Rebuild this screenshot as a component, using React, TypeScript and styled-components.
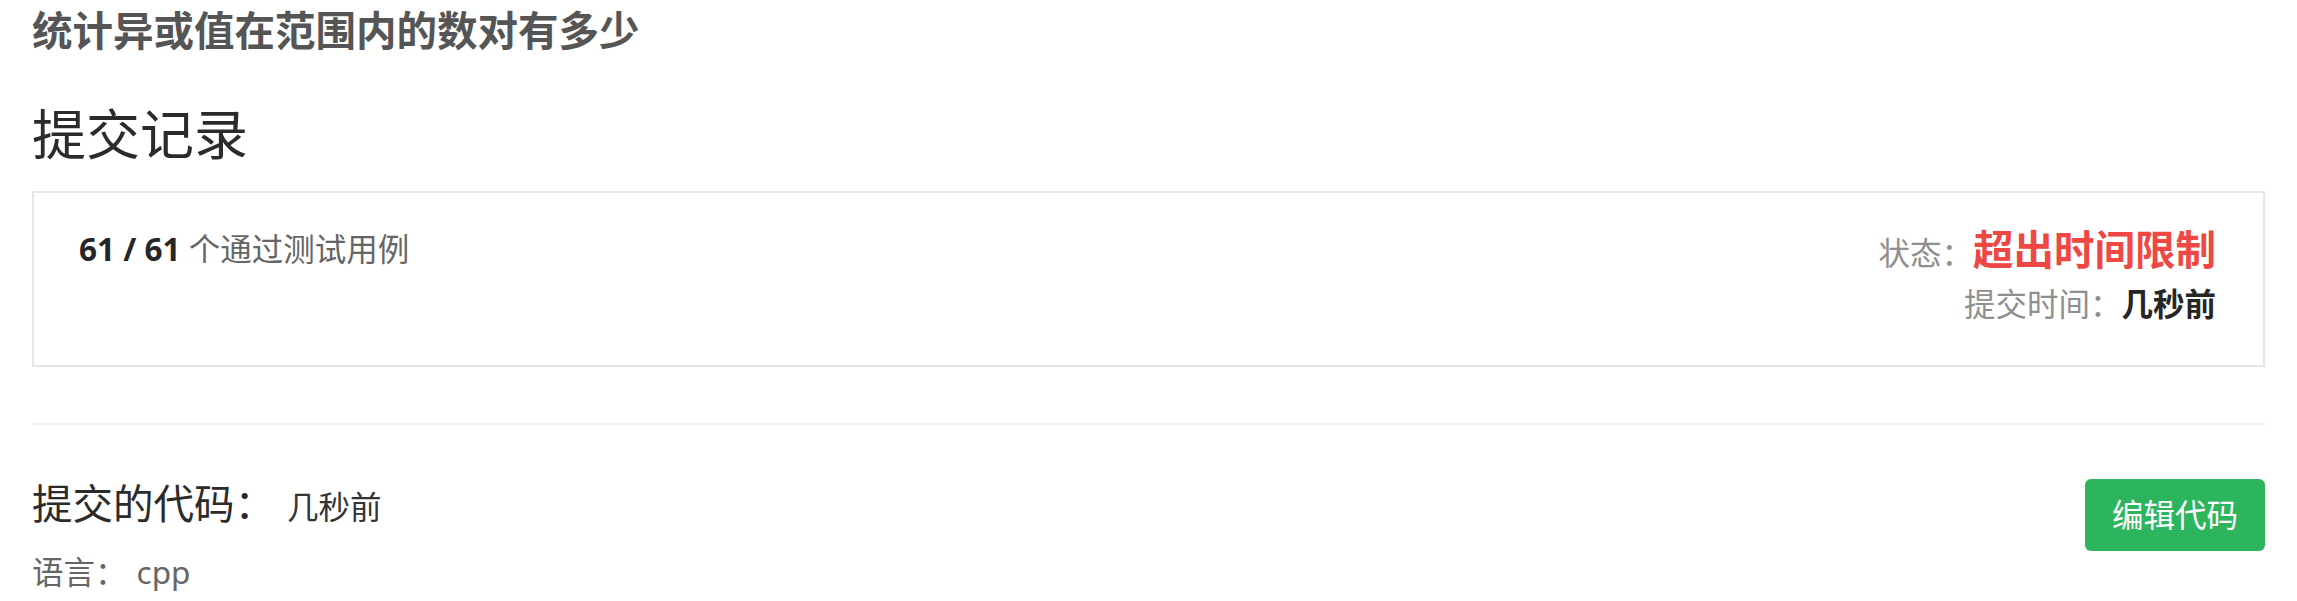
import styled, { createGlobalStyle } from "styled-components";

const GlobalStyle = createGlobalStyle`
  html, body {
    margin: 0;
    padding: 0;
    background: #fff;
  }
  body {
    font-family: "Noto Sans", "Noto Sans CJK SC", sans-serif;
  }
`;

const Page = styled.div`
  padding: 0 32px;
`;

const ProblemTitle = styled.h3`
  margin: 0;
  font-size: 40.5px;
  line-height: 62px;
  font-weight: 700;
  color: #555;
`;

const SectionTitle = styled.h2`
  margin: 32px 0 16px;
  font-size: 54px;
  line-height: 81px;
  font-weight: 400;
  color: #2b2b2b;
`;

const ResultBox = styled.div`
  display: flex;
  justify-content: space-between;
  align-items: flex-start;
  box-sizing: border-box;
  height: 176px;
  padding: 30px 47px 0 45px;
  border: 2px solid #e6e6e6;
`;

const CaseCount = styled.div`
  font-size: 31.5px;
  line-height: 52px;
  color: #666;

  b {
    color: #262626;
    font-weight: 700;
  }
`;

const StatusColumn = styled.div`
  text-align: right;
`;

const StatusLine = styled.div<{ $height: number }>`
  line-height: ${(p) => p.$height}px;
  font-size: 31.5px;
  color: #8f8f8f;
`;

const Verdict = styled.span`
  font-size: 40.5px;
  font-weight: 700;
  color: #ef4743;
`;

const Strong = styled.span`
  font-weight: 700;
  color: #262626;
`;

const Divider = styled.hr`
  margin: 56px 0 0;
  border: 0;
  border-top: 2px solid #efefef;
`;

const CodeHeader = styled.div`
  display: flex;
  justify-content: space-between;
  align-items: flex-start;
  margin-top: 49px;
`;

const CodeTitle = styled.h3`
  margin: 0;
  font-size: 40.5px;
  line-height: 60px;
  font-weight: 400;
  color: #2b2b2b;
`;

const CodeTime = styled.span`
  margin-left: 12px;
  font-size: 31.5px;
  color: #333;
`;

const EditButton = styled.button`
  margin-top: 5px;
  height: 72px;
  padding: 0 27px;
  border: 0;
  border-radius: 6px;
  background: #2db55d;
  color: #fff;
  font-family: inherit;
  font-size: 31.5px;
  line-height: 72px;
`;

const LangLine = styled.div`
  font-size: 31.5px;
  line-height: 42px;
  color: #666;

  span {
    margin-left: 10px;
  }
`;

export default function App() {
  return (
    <Page>
      <GlobalStyle />
      <ProblemTitle>统计异或值在范围内的数对有多少</ProblemTitle>
      <SectionTitle>提交记录</SectionTitle>
      <ResultBox>
        <CaseCount>
          <b>61 / 61</b> 个通过测试用例
        </CaseCount>
        <StatusColumn>
          <StatusLine $height={54}>
            状态：<Verdict>超出时间限制</Verdict>
          </StatusLine>
          <StatusLine $height={48}>
            提交时间：<Strong>几秒前</Strong>
          </StatusLine>
        </StatusColumn>
      </ResultBox>
      <Divider />
      <CodeHeader>
        <CodeTitle>
          提交的代码：<CodeTime>几秒前</CodeTime>
        </CodeTitle>
        <EditButton>编辑代码</EditButton>
      </CodeHeader>
      <LangLine>
        语言：<span>cpp</span>
      </LangLine>
    </Page>
  );
}
